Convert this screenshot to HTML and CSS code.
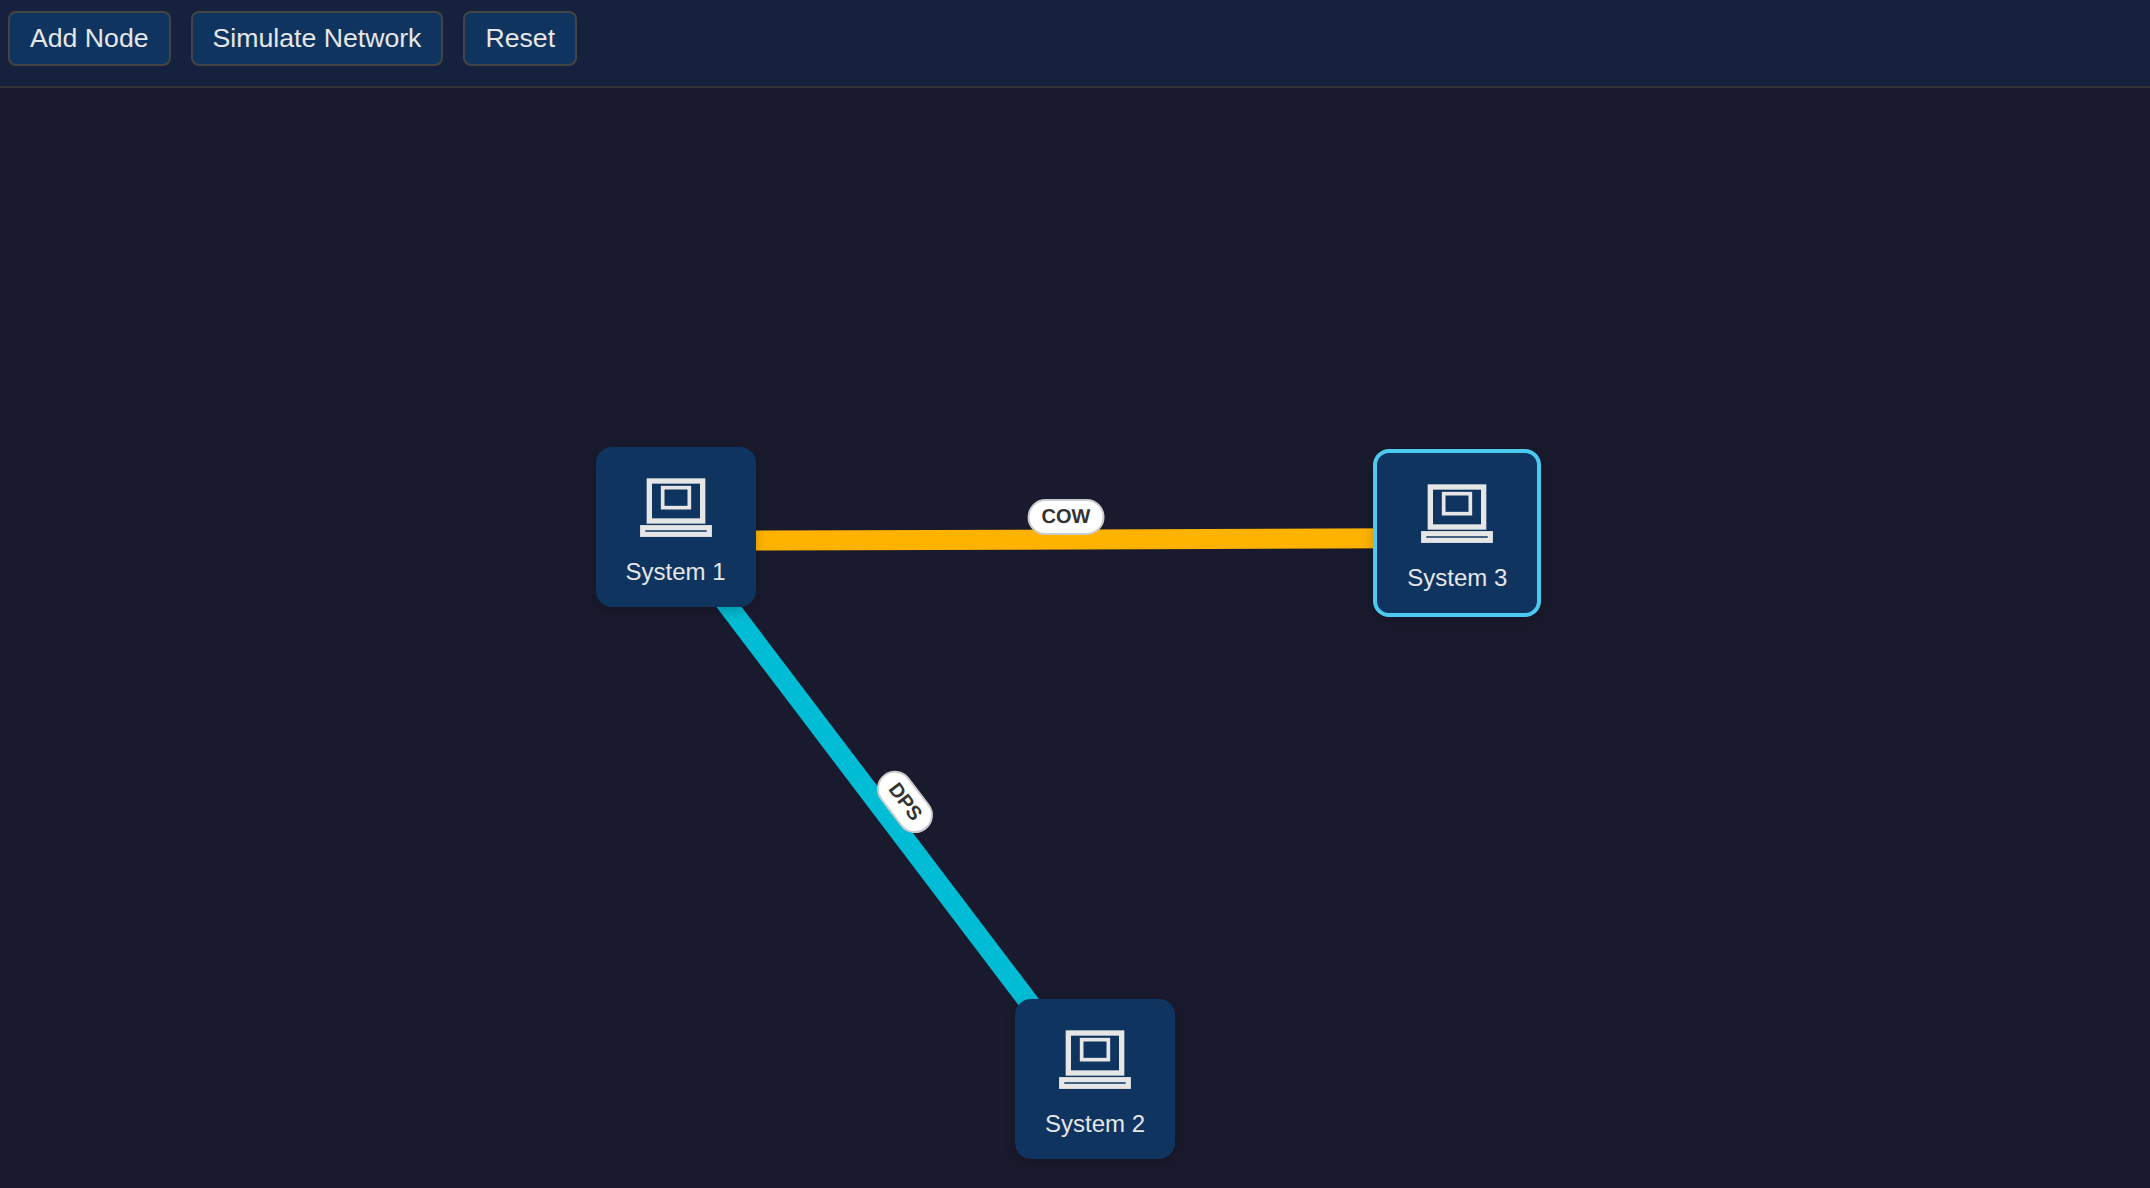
FILE: index.html
```html
<!DOCTYPE html>
<html lang="en">
<head>
<meta charset="utf-8">
<title>Network Simulator</title>
<link rel="stylesheet" href="styles.css">
</head>
<body>
<svg class="symbols" width="0" height="0">
  <symbol id="computer" viewBox="0 0 24 24">
    <g fill="none" stroke="currentColor">
      <rect x="4" y="3" width="16" height="12" stroke-width="1.6"/>
      <rect x="8" y="5" width="8" height="6" stroke-width="1.1"/>
      <rect x="2" y="17" width="20" height="2" stroke-width="1.55"/>
    </g>
  </symbol>
</svg>
<header class="toolbar">
  <button class="btn">Add Node</button>
  <button class="btn">Simulate Network</button>
  <button class="btn">Reset</button>
</header>
<main class="canvas">
  <svg class="links" width="2150" height="1100" viewBox="0 88 2150 1100">
    <line class="link link-cow" x1="677" y1="540.9" x2="1456" y2="538.1"/>
    <line class="link link-dps" x1="677" y1="538.4" x2="1092.5" y2="1086.3"/>
  </svg>
  <span class="label label-cow">COW</span>
  <span class="label label-dps">DPS</span>
  <div class="node node-1"><svg class="icon"><use href="#computer"/></svg><span class="name">System 1</span></div>
  <div class="node node-2"><svg class="icon"><use href="#computer"/></svg><span class="name">System 2</span></div>
  <div class="node node-3 selected"><svg class="icon"><use href="#computer"/></svg><span class="name">System 3</span></div>
</main>
</body>
</html>
```
FILE: styles.css
```css
* { box-sizing: border-box; }
body {
  margin: 0;
  height: 100vh;
  display: flex;
  flex-direction: column;
  overflow: hidden;
  background: #1a1a2e;
  color: #e6e6e6;
  font-family: "Liberation Sans", Arial, sans-serif;
}
.symbols { position: absolute; }
.toolbar {
  flex: none;
  display: flex;
  align-items: flex-start;
  gap: 20px;
  height: 88px;
  padding: 11px 8px;
  background: #16213e;
  border-bottom: 2px solid #333;
}
.btn {
  height: 55px;
  padding: 0 20px;
  border: 2px solid #444;
  border-radius: 8px;
  background: #0f3460;
  color: inherit;
  font: 26.667px "Liberation Sans", Arial, sans-serif;
}
.canvas { position: relative; flex: 1; }
.links { position: absolute; left: 0; top: 0; }
.link { stroke-width: 20; }
.link-cow { stroke: #ffb300; }
.link-dps { stroke: #00bcd4; }
.node {
  position: absolute;
  display: flex;
  flex-direction: column;
  align-items: center;
  width: 160px;
  height: 160px;
  padding-top: 24px;
  border-radius: 16px;
  background: #0f3460;
  box-shadow: 0 4px 12px rgba(0, 0, 0, .2);
}
.node-1 { left: 595.6px; top: 359px; }
.node-2 { left: 1015px; top: 911px; }
.node-3 { left: 1373.3px; top: 361px; }
.selected { width: 168px; height: 168px; border: 4px solid #4cc9f0; }
.icon { width: 80px; height: 80px; }
.name { margin-top: 6.5px; font-size: 24px; line-height: 28px; }
.label {
  position: absolute;
  display: flex;
  align-items: center;
  justify-content: center;
  height: 36px;
  padding: 0 12px 1px;
  border: 2px solid #ccc;
  border-radius: 18px;
  background: #fff;
  color: #333;
  font-size: 20px;
  font-weight: 700;
  transform: translate(-50%, -50%) rotate(var(--angle));
}
.label-cow { left: 1066px; top: 428.8px; --angle: -.2deg; }
.label-dps { left: 904.8px; top: 713.6px; --angle: 52.7deg; }
```
